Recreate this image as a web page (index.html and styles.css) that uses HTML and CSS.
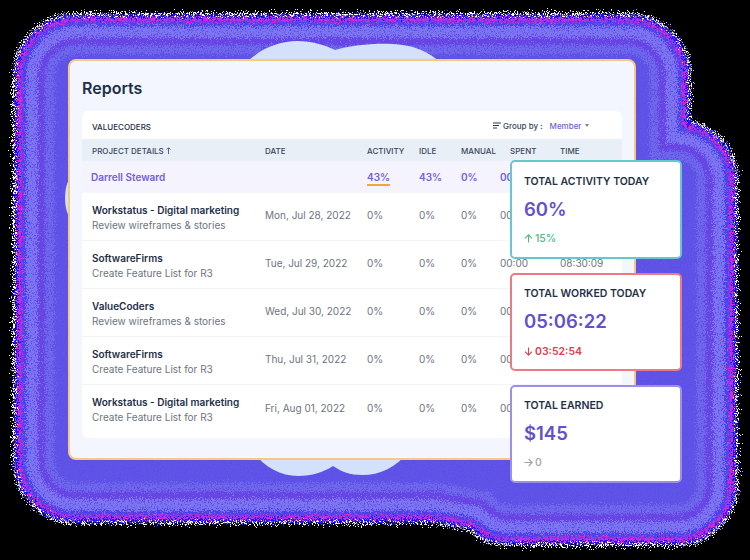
FILE: index.html
```html
<!DOCTYPE html>
<html lang="en">
<head>
    <meta charset="UTF-8">
    <title>Reports</title>
    <link rel="stylesheet" href="styles.css">
</head>
<body>
<div class="stage">

    <svg class="backdrop" width="750" height="560" viewBox="0 0 750 560">
        <defs>
            <g id="glowShape">
                <rect x="64" y="64" width="576" height="409" rx="12"/>
                <rect x="500" y="170" width="187" height="325" rx="10"/>
                <polygon points="440,473 560,495 560,400 440,400"/>
            </g>
            <filter id="grain" filterUnits="userSpaceOnUse" x="0" y="0" width="750" height="560" color-interpolation-filters="sRGB">
                <feTurbulence type="fractalNoise" baseFrequency="0.85" numOctaves="2" seed="4" result="noise"/>
                <feDisplacementMap in="SourceGraphic" in2="noise" scale="15" xChannelSelector="R" yChannelSelector="G" result="moved"/>
                <feTurbulence type="fractalNoise" baseFrequency="0.7" numOctaves="2" seed="9" result="spots"/>
                <feColorMatrix in="spots" type="matrix" values="0 0 0 0 .36  0 0 0 0 .3  0 0 0 0 .92  5 0 0 0 -2.600" result="tinted"/>
                <feComposite in="tinted" in2="moved" operator="in" result="specks"/>
                <feMerge>
                    <feMergeNode in="moved"/>
                    <feMergeNode in="specks"/>
                </feMerge>
            </filter>
        </defs>
        <g filter="url(#grain)" stroke-linejoin="round">
            <use href="#glowShape" fill="#fff" stroke="#fff" stroke-width="102"/>
            <use href="#glowShape" fill="#1a12ee" stroke="#1a12ee" stroke-width="98"/>
            <use href="#glowShape" fill="#e024d8" stroke="#e024d8" stroke-width="92"/>
            <use href="#glowShape" fill="#4a40ea" stroke="#4a40ea" stroke-width="85"/>
            <use href="#glowShape" fill="#7e76f0" stroke="#7e76f0" stroke-width="76"/>
            <use href="#glowShape" fill="#6a44e2" stroke="#6a44e2" stroke-width="52"/>
            <use href="#glowShape" fill="#7068ea" stroke="#7068ea" stroke-width="38"/>
            <use href="#glowShape" fill="#5f54e6" stroke="#5f54e6" stroke-width="20"/>
        </g>
        <g class="cloud">
            <path d="M240 70C255 50 278 41 297 41C312 41 325 45 335 50C352 45 375 43 392 44C415 45 432 52 448 70Z"/>
            <path d="M252 450C262 466 280 476 298 476C312 476 324 472 333 466C342 472 350 475 362 475C380 475 396 468 410 450Z"/>
            <ellipse cx="76" cy="198" rx="11" ry="24"/>
        </g>
    </svg>

    <div class="report">
        <h1>Reports</h1>
        <div class="panel">
            <div class="panel-top">
                <span class="company">VALUECODERS</span>
                <div class="group-by">
                    <svg width="8" height="8" viewBox="0 0 8 8"><path d="M0 1h8M0 3.5h6M0 6h4" stroke="#2c3a4f" stroke-width="1.100" fill="none"/></svg>
                    <span>Group by :</span>
                    <span class="member">Member</span>
                    <span class="caret"></span>
                </div>
            </div>

            <div class="row head">
                <span>PROJECT DETAILS <svg width="5" height="7" viewBox="0 0 5 7"><path d="M2.500 7V1M.6 2.600 2.500.7l1.900 1.900" stroke="#3a475a" stroke-width=".8" fill="none"/></svg></span>
                <span>DATE</span>
                <span>ACTIVITY</span>
                <span>IDLE</span>
                <span>MANUAL</span>
                <span class="spent-head">SPENT</span>
                <span>TIME</span>
            </div>

            <div class="row total">
                <span class="who">Darrell Steward</span>
                <span></span>
                <span><span class="marked">43%</span></span>
                <span>43%</span>
                <span>0%</span>
                <span>00</span>
            </div>

            <div class="row item">
                <div><div class="name">Workstatus - Digital marketing</div><div class="task">Review wireframes &amp; stories</div></div>
                <span>Mon, Jul 28, 2022</span><span>0%</span><span>0%</span><span>0%</span><span>00</span>
            </div>
            <div class="row item">
                <div><div class="name">SoftwareFirms</div><div class="task">Create Feature List for R3</div></div>
                <span>Tue, Jul 29, 2022</span><span>0%</span><span>0%</span><span>0%</span><span>00:00</span><span>08:30:09</span>
            </div>
            <div class="row item">
                <div><div class="name">ValueCoders</div><div class="task">Review wireframes &amp; stories</div></div>
                <span>Wed, Jul 30, 2022</span><span>0%</span><span>0%</span><span>0%</span><span>00</span>
            </div>
            <div class="row item">
                <div><div class="name">SoftwareFirms</div><div class="task">Create Feature List for R3</div></div>
                <span>Thu, Jul 31, 2022</span><span>0%</span><span>0%</span><span>0%</span><span>00</span>
            </div>
            <div class="row item">
                <div><div class="name">Workstatus - Digital marketing</div><div class="task">Create Feature List for R3</div></div>
                <span>Fri, Aug 01, 2022</span><span>0%</span><span>0%</span><span>0%</span><span>00</span>
            </div>
        </div>
    </div>

    <div class="stats">
        <div class="stat teal">
            <div class="stat-title">TOTAL ACTIVITY TODAY</div>
            <div class="stat-value">60%</div>
            <div class="stat-delta up">
                <svg width="9" height="9" viewBox="0 0 9 9"><path d="M4.500 8.500V1M1 4.300 4.500.8 8 4.300" stroke="currentColor" stroke-width="1.100" fill="none"/></svg>
                15%
            </div>
        </div>
        <div class="stat red">
            <div class="stat-title">TOTAL WORKED TODAY</div>
            <div class="stat-value">05:06:22</div>
            <div class="stat-delta down">
                <svg width="9" height="9" viewBox="0 0 9 9"><path d="M4.500.5V8M1 4.700 4.500 8.200 8 4.700" stroke="currentColor" stroke-width="1.100" fill="none"/></svg>
                03:52:54
            </div>
        </div>
        <div class="stat violet">
            <div class="stat-title">TOTAL EARNED</div>
            <div class="stat-value">$145</div>
            <div class="stat-delta flat">
                <svg width="9" height="9" viewBox="0 0 9 9"><path d="M.5 4.500H8M4.700 1 8.200 4.500 4.700 8" stroke="currentColor" stroke-width="1.100" fill="none"/></svg>
                0
            </div>
        </div>
    </div>

</div>
</body>
</html>
```

FILE: styles.css
```css
html, body {
    margin: 0;
    background-color: #000;
}
body {
    font-family: "Inter", "Liberation Sans", sans-serif;
    color: #1e3048;
}

.stage {
    position: relative;
    width: 750px;
    height: 560px;
    overflow: hidden;
    padding: 59px 0 0 68px;
    box-sizing: border-box;
}
.backdrop {
    position: absolute;
    left: 0;
    top: 0;
}
.cloud {
    fill: #d3e1fb;
}

/* Main report card */
.report {
    position: relative;
    box-sizing: border-box;
    width: 568px;
    height: 401px;
    padding: 0 12px;
    background-color: #f3f6fe;
    border: 2px solid #f6c983;
    border-radius: 8px;
}
h1 {
    margin: 0;
    height: 50px;
    line-height: 55px;
    font-size: 16px;
    font-weight: 600;
}
.panel {
    height: 327px;
    background-color: #fff;
    border-radius: 6px;
    overflow: hidden;
}
.panel-top {
    display: flex;
    justify-content: space-between;
    height: 28px;
    padding-left: 10px;
    line-height: 32px;
    font-size: 8px;
    font-weight: 500;
}
.group-by {
    display: flex;
    align-items: center;
    height: 29px;
    width: 131px;
    gap: 3px;
    font-size: 8px;
    line-height: 1;
    color: #3a475a;
}
.group-by svg {
    margin: 0 -1px 0 2px;
}
.member {
    margin-left: 4px;
    color: #7361d6;
}
.caret {
    margin-left: 1px;
    border: 2.500px solid transparent;
    border-top: 3px solid #7b8494;
    border-bottom: 0;
}

/* Table rows */
.row {
    display: grid;
    grid-template-columns: 173px 102px 52px 42px 39px 60px 1fr;
    align-items: center;
    padding-left: 10px;
}
.head {
    height: 22px;
    padding-top: 2px;
    box-sizing: border-box;
    background-color: #e9eff7;
    font-size: 8px;
    font-weight: 500;
    color: #3a475a;
}
.spent-head {
    padding-left: 10px;
}
.total {
    height: 32px;
    background-color: #f5f3fe;
    font-size: 10px;
    font-weight: 600;
    color: #7361d6;
}
.who {
    margin-left: -1px;
}
.marked {
    display: inline-block;
    border-bottom: 2px solid #eca83c;
    padding-bottom: 1px;
    margin-bottom: -3px;
}
.item {
    height: 48px;
    border-bottom: 1px solid #f2f4f7;
    box-sizing: border-box;
    font-size: 10px;
    color: #6d7480;
}
.item > span {
    margin-top: -3px;
}
.item:last-child {
    border-bottom: none;
}
.name {
    font-weight: 600;
    color: #1e3048;
    margin-top: 1px;
    margin-bottom: 3px;
}

/* Stat cards that sit over the table */
.stats {
    position: absolute;
    left: 510px;
    top: 160px;
    width: 172px;
    display: flex;
    flex-direction: column;
    gap: 14px;
}
.stat {
    box-sizing: border-box;
    height: 98px;
    padding: 12px 12px 0;
    background-color: #fff;
    border: 2px solid;
    border-radius: 5px;
}
.teal { border-color: #66c6d2; height: 99px; padding-top: 13px; }
.red { border-color: #ea7a86; }
.violet { border-color: #9d8fe6; }
.stat-title {
    font-size: 10.500px;
    font-weight: 600;
}
.stat-value {
    margin-top: 9px;
    font-size: 18.500px;
    line-height: 24px;
    font-weight: 600;
    color: #6450c8;
}
.stat-delta {
    display: flex;
    align-items: center;
    gap: 2px;
    margin-top: 11px;
    font-size: 10.500px;
    font-weight: 500;
}
.red .stat-delta {
    margin-top: 12px;
}
.up { color: #4fb98a; }
.down { color: #e0404f; font-weight: 600; }
.flat { color: #9ea3ab; }
```
